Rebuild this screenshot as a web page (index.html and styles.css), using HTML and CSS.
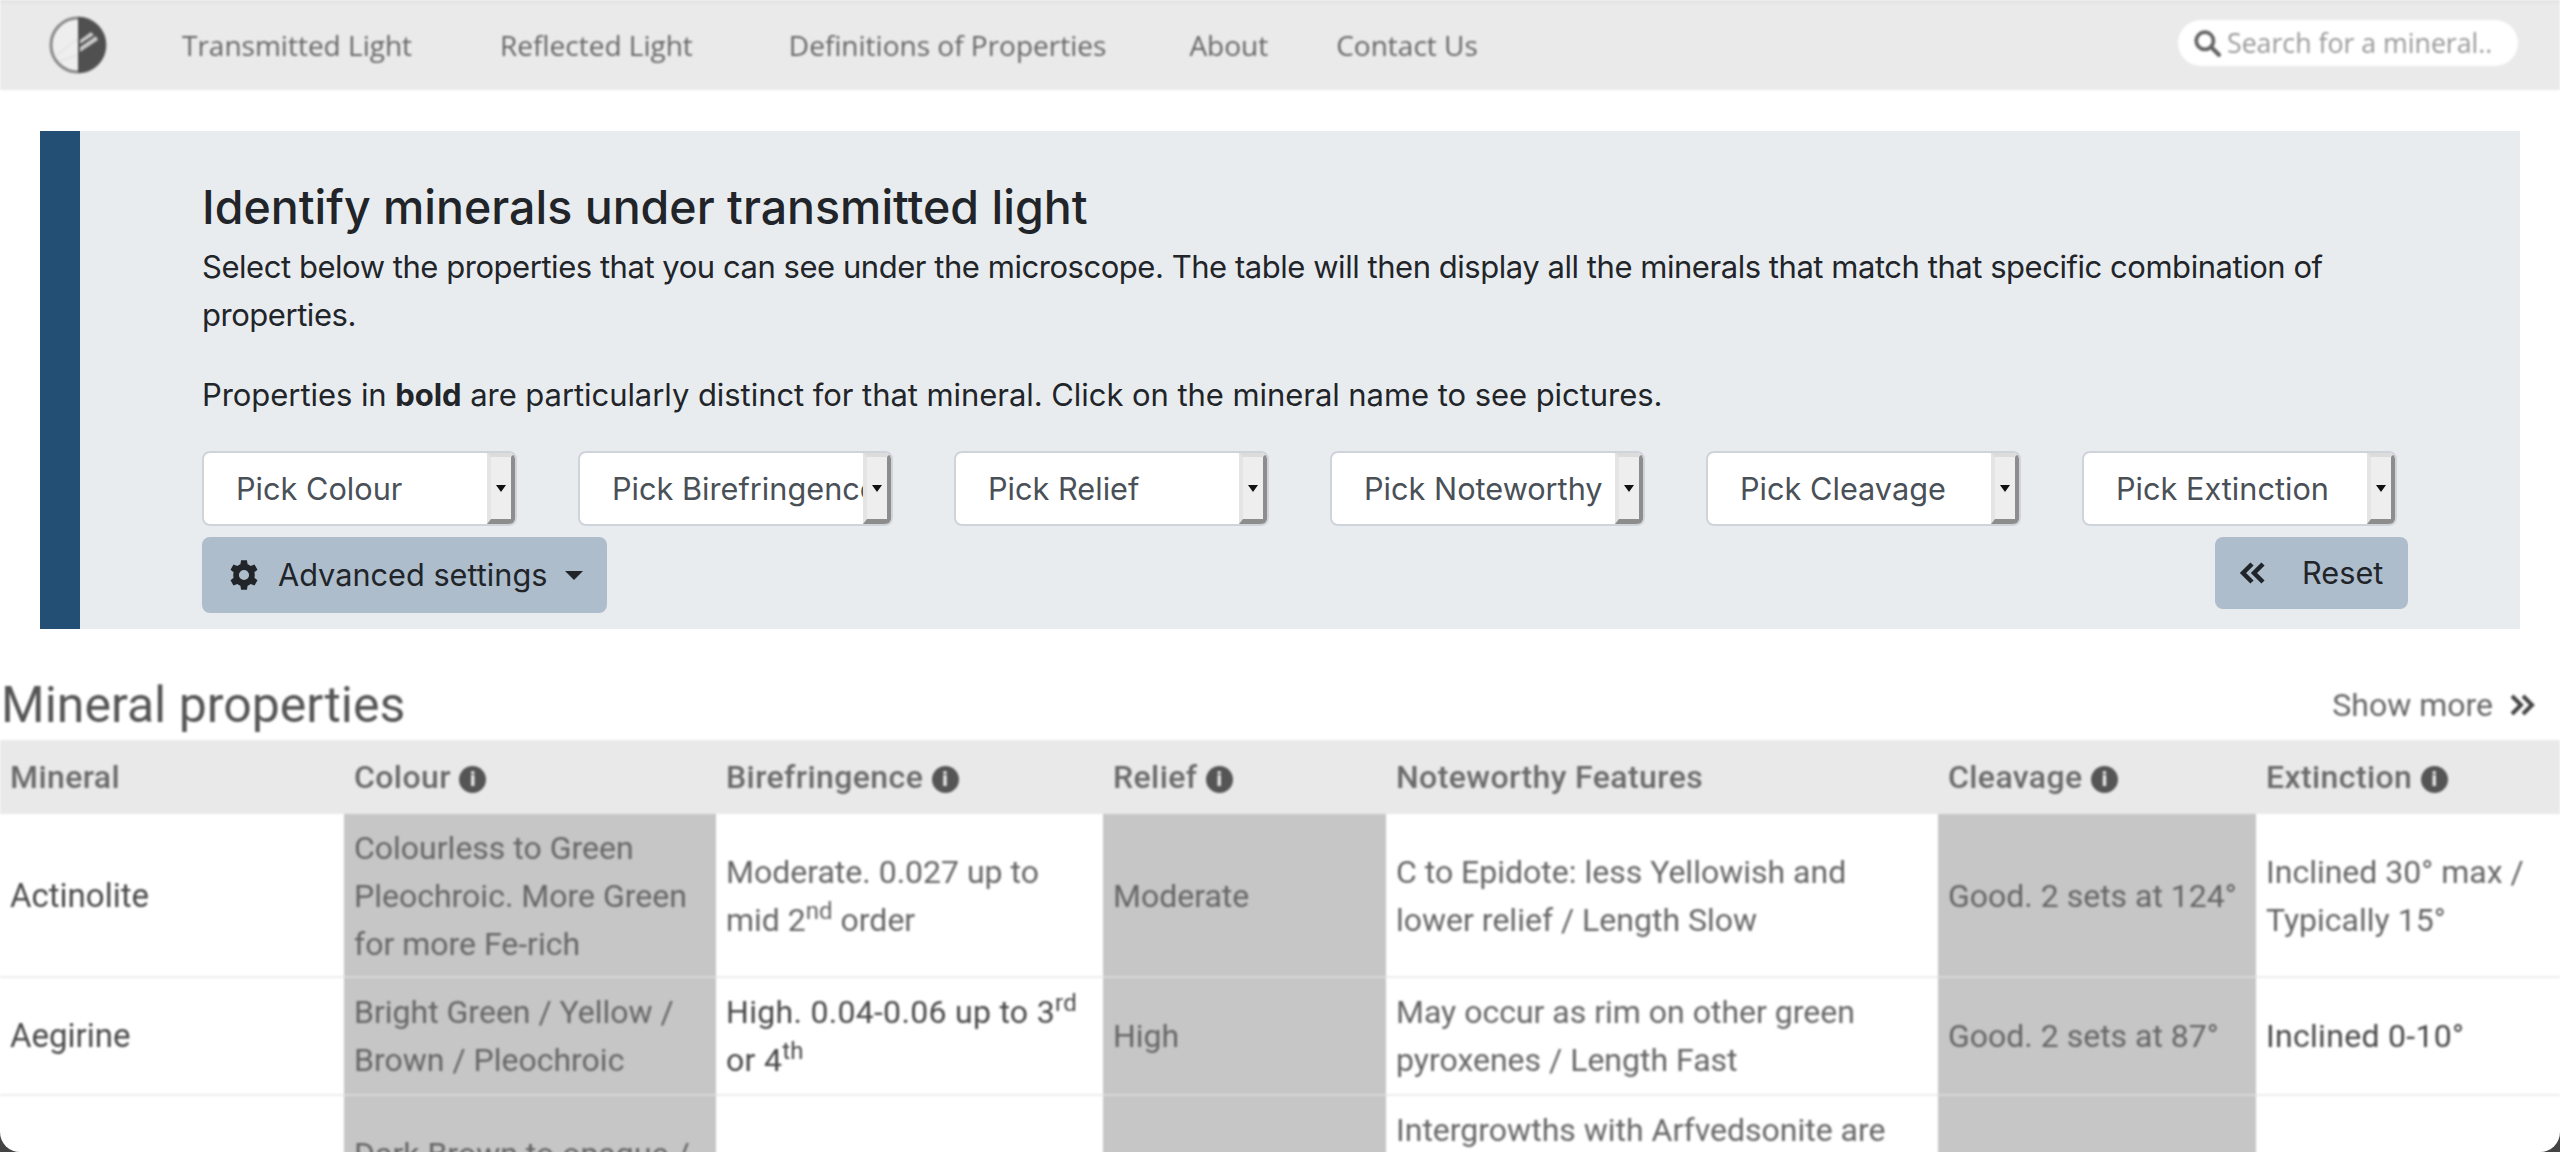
FILE: index.html
```html
<!DOCTYPE html>
<html lang="en">
<head>
    <meta charset="UTF-8">
    <title>Identify minerals under transmitted light</title>
    <link rel="stylesheet" href="styles.css">
</head>
<body>
    <nav class="navbar">
        <svg class="logo" width="60" height="60" viewBox="0 0 60 60">
            <circle cx="30" cy="30" r="27" fill="#eee" stroke="#8a8a8a" stroke-width="3"/>
            <path d="M30 2a28 28 0 0 1 0 56z" fill="#505050"/>
            <path d="M32 32l16-11 2 4-18 12zM32 25l11-8 3 3-14 9z" fill="#c8c8c8"/>
            <path d="M8 40L30 24M12 46L30 40" stroke="#ddd" stroke-width="1" fill="none"/>
        </svg>
        <a class="nav-link link-transmitted" href="#">Transmitted Light</a>
        <a class="nav-link link-reflected" href="#">Reflected Light</a>
        <a class="nav-link link-definitions" href="#">Definitions of Properties</a>
        <a class="nav-link link-about" href="#">About</a>
        <a class="nav-link" href="#">Contact Us</a>
        <div class="search">
            <svg width="28" height="28" viewBox="0 0 26 26">
                <circle cx="11" cy="11" r="8" fill="none" stroke="#666" stroke-width="3.5"/>
                <path d="M17 17l7 7" stroke="#666" stroke-width="4" stroke-linecap="round"/>
            </svg>
            <span>Search for a mineral..</span>
        </div>
    </nav>

    <section class="intro">
        <h1>Identify minerals under transmitted light</h1>
        <p class="lead">Select below the properties that you can see under the microscope. The table will then display all the minerals that match that specific combination of properties.</p>
        <p class="hint">Properties in <b>bold</b> are particularly distinct for that mineral. Click on the mineral name to see pictures.</p>
        <div class="picks">
            <div class="pick"><span class="pick-label">Pick Colour</span><span class="pick-arrow"></span></div>
            <div class="pick"><span class="pick-label">Pick Birefringence</span><span class="pick-arrow"></span></div>
            <div class="pick"><span class="pick-label">Pick Relief</span><span class="pick-arrow"></span></div>
            <div class="pick"><span class="pick-label">Pick Noteworthy</span><span class="pick-arrow"></span></div>
            <div class="pick"><span class="pick-label">Pick Cleavage</span><span class="pick-arrow"></span></div>
            <div class="pick"><span class="pick-label">Pick Extinction</span><span class="pick-arrow"></span></div>
        </div>
        <div class="actions">
            <button class="btn btn-advanced">
                <svg width="32" height="32" viewBox="0 0 24 24"><path fill="#212529" fill-rule="evenodd" d="M14.200 1H9.800l-.5 3a8.500 8.500 0 0 0-2.300 1.300L4.100 4.200 1.900 8l2.300 1.900a8.500 8.500 0 0 0 0 4.200L1.900 16l2.200 3.800 2.900-1.100a8.500 8.500 0 0 0 2.300 1.300l.5 3h4.400l.5-3a8.500 8.500 0 0 0 2.300-1.300l2.900 1.100 2.200-3.800-2.300-1.900a8.500 8.500 0 0 0 0-4.200L22.100 8l-2.200-3.800L17 5.300A8.500 8.500 0 0 0 14.700 4zM12 8.200a3.800 3.800 0 1 1 0 7.600 3.800 3.800 0 0 1 0-7.600z"/></svg>
                <span>Advanced settings</span>
                <i class="caret"></i>
            </button>
            <button class="btn btn-reset">
                <svg width="28" height="24" viewBox="0 0 28 24"><path d="M13 3L4 12l9 9M24 3l-9 9 9 9" fill="none" stroke="#212529" stroke-width="4.500"/></svg>
                <span>Reset</span>
            </button>
        </div>
    </section>

    <section class="results">
        <div class="results-head">
            <h2>Mineral properties</h2>
            <a class="show-more" href="#">Show more
                <svg width="26" height="24" viewBox="0 0 26 24"><path d="M3 3l9 9-9 9M14 3l9 9-9 9" fill="none" stroke="#444" stroke-width="4"/></svg>
            </a>
        </div>
        <table>
            <colgroup>
                <col class="col-mineral"><col class="col-colour"><col class="col-biref"><col class="col-relief"><col class="col-note"><col class="col-cleavage"><col class="col-extinction">
            </colgroup>
            <thead>
                <tr>
                    <th>Mineral</th>
                    <th>Colour <i class="info">i</i></th>
                    <th>Birefringence <i class="info">i</i></th>
                    <th>Relief <i class="info">i</i></th>
                    <th>Noteworthy Features</th>
                    <th>Cleavage <i class="info">i</i></th>
                    <th>Extinction <i class="info">i</i></th>
                </tr>
            </thead>
            <tbody>
                <tr>
                    <td class="name">Actinolite</td>
                    <td class="shade">Colourless to Green Pleochroic. More Green for more Fe-rich</td>
                    <td>Moderate. 0.027 up to mid 2<sup>nd</sup> order</td>
                    <td class="shade">Moderate</td>
                    <td>C to Epidote: less Yellowish and lower relief / Length Slow</td>
                    <td class="shade">Good. 2 sets at 124°</td>
                    <td>Inclined 30° max / Typically 15°</td>
                </tr>
                <tr>
                    <td class="name">Aegirine</td>
                    <td class="shade">Bright Green / Yellow / Brown / Pleochroic</td>
                    <td class="strong">High. 0.04-0.06 up to 3<sup>rd</sup> or 4<sup>th</sup></td>
                    <td class="shade">High</td>
                    <td>May occur as rim on other green pyroxenes / Length Fast</td>
                    <td class="shade">Good. 2 sets at 87°</td>
                    <td class="strong">Inclined 0-10°</td>
                </tr>
                <tr class="row-cut">
                    <td></td>
                    <td class="shade second-line">Dark Brown to opaque /</td>
                    <td></td>
                    <td class="shade"></td>
                    <td>Intergrowths with Arfvedsonite are</td>
                    <td class="shade"></td>
                    <td></td>
                </tr>
            </tbody>
        </table>
    </section>
</body>
</html>
```

FILE: styles.css
```css
* {
    box-sizing: border-box;
}

html {
    height: 1152px;
    overflow: hidden;
    background-color: #444;
}

body {
    height: 1152px;
    margin: 0;
    overflow: hidden;
    border-radius: 0 0 20px 20px;
    background-color: #fff;
    font-family: "Inter", "Roboto", sans-serif;
    font-size: 31px;
    line-height: 48px;
    color: #212529;
}

.navbar {
    display: flex;
    align-items: center;
    height: 90px;
    padding: 0 42px 4px 48px;
    border-top: 3px solid #e2e2e2;
    background-color: #eaeaea;
    font-family: "Open Sans", sans-serif;
    font-size: 28px;
    filter: blur(0.8px);
}

.logo {
    margin-right: 74px;
}

.nav-link {
    color: #666;
    text-decoration: none;
}

.link-transmitted { margin-right: 88px; }
.link-reflected { margin-right: 96px; }
.link-definitions { margin-right: 83px; }
.link-about { margin-right: 68px; }

.search {
    display: flex;
    align-items: center;
    gap: 6px;
    width: 340px;
    height: 46px;
    margin-left: auto;
    margin-top: -4px;
    padding-left: 15px;
    border-radius: 23px;
    background-color: #fff;
    color: #999;
    font-size: 26.7px;
    white-space: nowrap;
}

.intro {
    height: 498px;
    margin: 41px 40px 0;
    padding: 48px 112px 0 122px;
    border-left: 40px solid #234f74;
    background-color: #e9ecef;
}

.intro h1 {
    margin: 0 0 8px;
    font-size: 46.5px;
    line-height: 56px;
    font-weight: 500;
}

.intro p {
    margin: 0 0 32px;
}

.intro .lead {
    letter-spacing: -0.46px;
}

.intro .hint {
    margin-bottom: 32px;
    letter-spacing: -0.06px;
}

.picks {
    display: flex;
    gap: 61px;
    font-size: 30.7px;
}

.pick {
    display: flex;
    flex: none;
    width: 315px;
    height: 75px;
    border: 2px solid #ced4da;
    border-radius: 8px;
    overflow: hidden;
    background-color: #fff;
    color: #495057;
}

.pick-label {
    flex: 1;
    min-width: 0;
    padding: 12px 0 0 32px;
    white-space: nowrap;
    overflow: hidden;
}

.pick-arrow {
    display: flex;
    flex: none;
    align-items: center;
    justify-content: center;
    width: 28px;
    border-style: solid;
    border-width: 4px 4px 5px 4px;
    border-color: #dcdcdc #8d8d8d #8d8d8d #e4e4e4;
    background-color: #eee;
}

.pick-arrow::after {
    content: "";
    border-style: solid;
    border-width: 7px 5px 0;
    border-color: #111 transparent transparent;
}

.actions {
    display: flex;
    justify-content: space-between;
    align-items: flex-start;
    margin-top: 11px;
}

.btn {
    display: flex;
    align-items: center;
    border: none;
    border-radius: 8px;
    background-color: #adbdcc;
    color: #212529;
    font: inherit;
    font-size: 30.7px;
}

.btn-advanced {
    gap: 18px;
    width: 405px;
    height: 76px;
    padding: 0 0 0 26px;
}

.btn-reset {
    gap: 35px;
    width: 193px;
    height: 72px;
    padding: 0 0 0 24px;
}

.caret {
    border-style: solid;
    border-width: 9px 9px 0;
    border-color: #212529 transparent transparent;
}

.results {
    margin-top: 35px;
    color: #666;
    filter: blur(0.9px);
    font-family: "Roboto", sans-serif;
    font-size: 32px;
}

.results-head {
    display: flex;
    justify-content: space-between;
    align-items: center;
    height: 76px;
    padding: 5px 25px 0 1px;
}

.results-head h2 {
    margin: 0;
    font-size: 50px;
    font-weight: 400;
    color: #555;
}

.show-more {
    display: flex;
    align-items: center;
    gap: 16px;
    color: #666;
    text-decoration: none;
}

table {
    width: 2560px;
    table-layout: fixed;
    border-collapse: collapse;
}

.col-mineral { width: 344px; }
.col-colour { width: 372px; }
.col-biref { width: 387px; }
.col-relief { width: 283px; }
.col-note { width: 552px; }
.col-cleavage { width: 318px; }
.col-extinction { width: 304px; }

th {
    height: 74px;
    padding: 0 10px;
    background-color: #e9e9e9;
    color: #6a6a6a;
    font-weight: 500;
    letter-spacing: 0.4px;
    text-align: left;
}

td {
    padding: 10px;
    border-top: 2px solid #ececec;
    vertical-align: middle;
}

tbody tr:first-child td {
    padding-bottom: 8px;
    border-top: none;
}

sup {
    line-height: 0;
    font-size: 75%;
}

.name {
    color: #4a4a4a;
    font-size: 33px;
}

.shade {
    background-color: #c6c6c6;
    border-top-color: #d8d8d8;
}

.strong {
    color: #484848;
    letter-spacing: 0.3px;
}

.info {
    display: inline-block;
    width: 27px;
    height: 27px;
    border-radius: 50%;
    background-color: #555;
    color: #e9e9e9;
    font-size: 20px;
    font-style: normal;
    font-weight: 900;
    line-height: 27px;
    text-align: center;
    vertical-align: 2px;
    letter-spacing: 0;
}

.row-cut td {
    height: 213px;
    vertical-align: top;
}

.row-cut .second-line {
    padding-top: 34px;
}
```
